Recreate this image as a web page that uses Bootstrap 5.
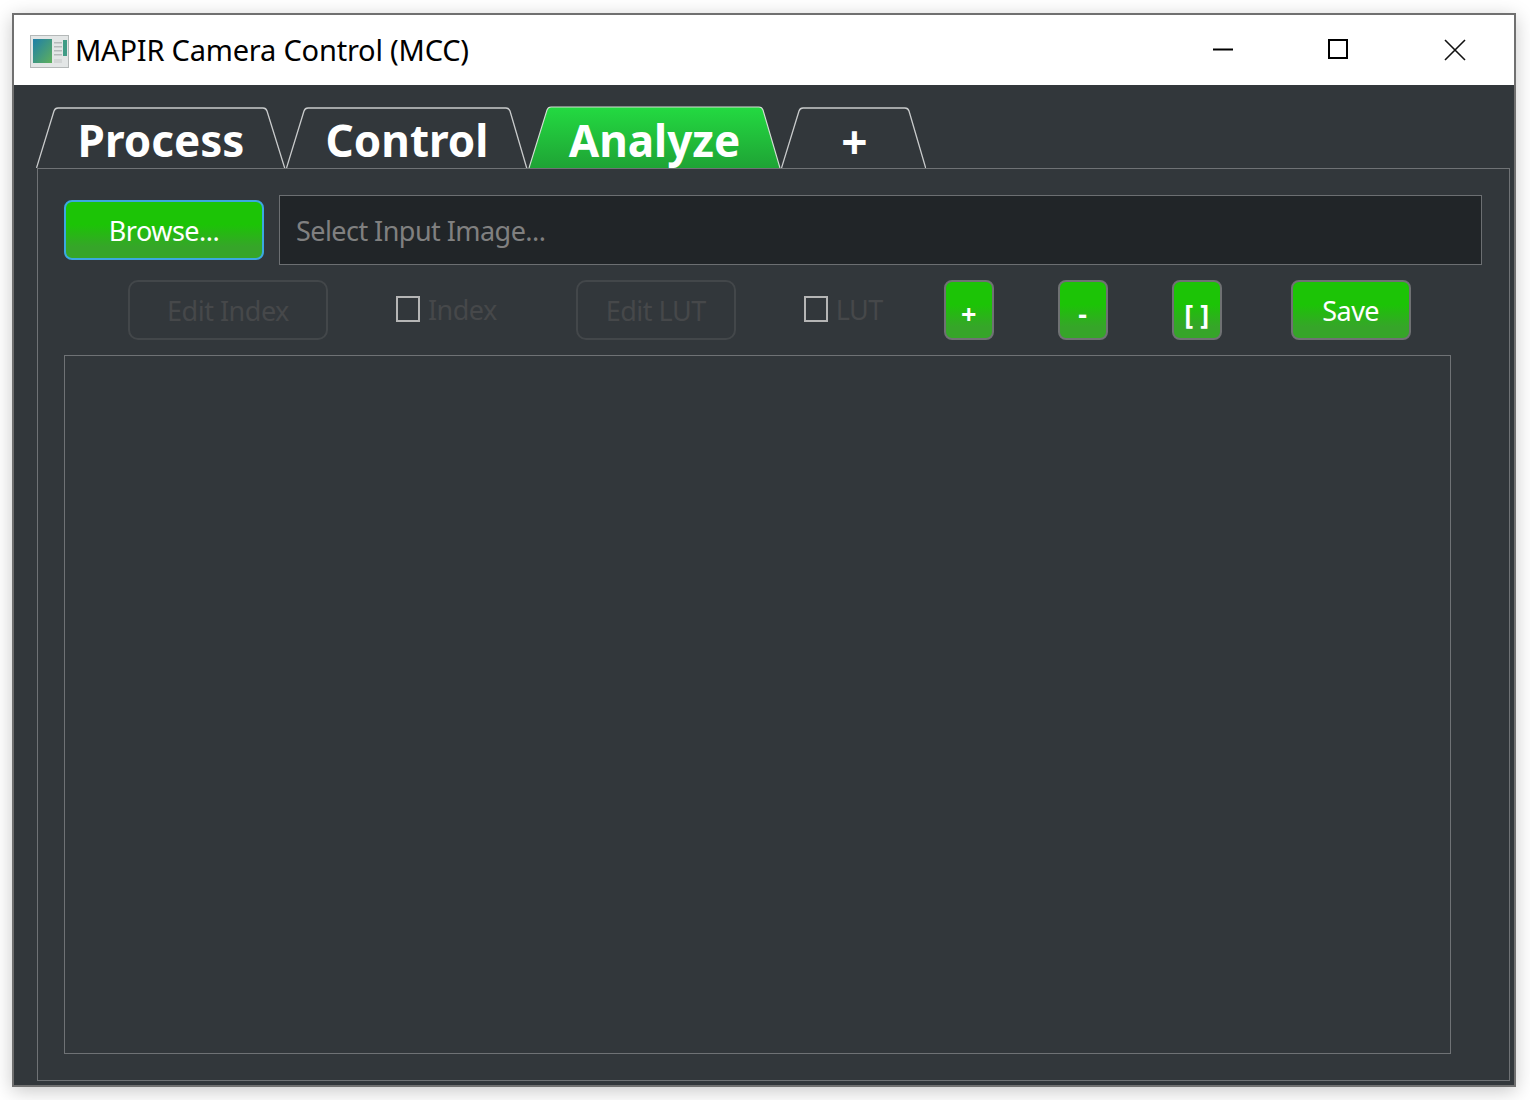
<!DOCTYPE html>
<html lang="en">
<head>
    <meta charset="UTF-8">
    <meta name="viewport" content="width=device-width, initial-scale=1.0">
    <title>MAPIR Camera Control (MCC)</title>
    <link href="https://cdn.jsdelivr.net/npm/bootstrap@5.3.2/dist/css/bootstrap.min.css" rel="stylesheet">
    <style>
        html, body { height: 100%; }
        body { background: #fff; font-family: "Noto Sans", "Open Sans", sans-serif; overflow: hidden; }
        .app-window { width: 1504px; height: 1074px; margin: 13px 0 0 12px; border: 2px solid #707070; box-shadow: 0 4px 18px rgba(0,0,0,.22); background: #32373b; }
        .title-bar { height: 70px; background: #fff; padding-left: 16px; }
        .title-icon { margin-right: 5px; margin-top: 2px; }
        .title-text { font-size: 29px; color: #000; line-height: 1; letter-spacing: -.2px; padding-bottom: 2px; }
        .win-btns { margin-right: 48px; gap: 95px; }
        .win-max { margin-top: -2px; margin-right: 1px; }
        .tab-strip { padding: 22px 0 0 22px; height: 83px; }
        .tab-item { display: grid; height: 61px; color: #fff; font-weight: 700; font-size: 44px; line-height: 1; }
        .tab-item > * { grid-area: 1 / 1; }
        .tab-label { place-self: center; padding-top: 5px; }
        .tab-plus { font-size: 46px; padding: 6px 0 0 2px; }
        .tab-pane-box { margin: 0 4px 0 23px; height: 913px; border: 1px solid #6f7275; padding: 26px 27px 26px 26px; }
        .browse-row { gap: 15px; height: 70px; }
        .green-btn { background: linear-gradient(#1cc406 40%, #36a529 80%); border: 2px solid #6f7173; border-radius: 8px; color: #fff; font-size: 27px; letter-spacing: -.5px; height: 60px; padding: 0; line-height: 1; }
        .green-btn:hover { color: #fff; }
        .browse-btn { width: 200px; border-color: #3ba8e0; }
        .path-input { flex: 1; height: 70px; background: #212528; border: 1px solid #6c6f72; color: #808080; font-size: 27px; letter-spacing: -.55px; padding: 0 16px; border-radius: 0; }
        .path-input::placeholder { color: #808080; opacity: 1; }
        .tool-row { height: 60px; margin-top: 15px; padding-left: 64px; }
        .off-btn, .off-btn:disabled { background: transparent; border: 2px solid #43474a; border-radius: 10px; color: #46484a; font-size: 27px; letter-spacing: -.5px; height: 60px; padding: 0; line-height: 1; opacity: 1; }
        .check-wrap { color: #46484a; font-size: 27px; letter-spacing: -.55px; line-height: 1; padding-bottom: 2px; }
        .check-box { display: block; width: 24px; height: 26px; border: 2px solid #b5b5b5; margin-right: 8px; }
        .w-index { width: 200px; }
        .w-lut { width: 160px; margin-left: 79px; }
        .ml-index { margin-left: 68px; }
        .ml-lut { margin-left: 68px; }
        .square-btn { width: 50px; font-weight: 700; font-size: 27px; letter-spacing: 0; padding-top: 6px; }
        .ml-plus { margin-left: 61px; }
        .ml-step { margin-left: 64px; }
        .save-btn { width: 120px; margin-left: 69px; }
        .view-box { width: 1387px; height: 699px; margin-top: 15px; border: 1px solid #6f7275; }
    </style>
</head>
<body>
    <div class="app-window d-flex flex-column">
        <div class="title-bar d-flex align-items-center">
            <svg class="title-icon" width="40" height="33" viewBox="0 0 40 33">
                <defs>
                    <linearGradient id="iconMap" x1="0" y1="0" x2="1" y2="1">
                        <stop offset="0" stop-color="#1f7fa8"/><stop offset="1" stop-color="#5fb05c"/>
                    </linearGradient>
                </defs>
                <rect x=".5" y=".5" width="38" height="32" fill="#e3e6e6" stroke="#b4b8b8"/>
                <rect x="3" y="4" width="19" height="24" fill="url(#iconMap)"/>
                <rect x="24" y="7" width="8" height="1.5" fill="#b5baba"/>
                <rect x="24" y="11" width="8" height="1.5" fill="#b5baba"/>
                <rect x="24" y="15" width="8" height="1.5" fill="#b5baba"/>
                <rect x="24" y="19" width="8" height="1.5" fill="#b5baba"/>
                <rect x="24" y="24" width="8" height="4" fill="#d3d6d6"/>
                <rect x="33" y="5" width="4" height="16" fill="#3f9b85"/>
            </svg>
            <span class="title-text">MAPIR Camera Control (MCC)</span>
            <div class="win-btns ms-auto d-flex align-items-center">
                <svg width="20" height="20" viewBox="0 0 20 20"><path d="M0 9.5h20" stroke="#000" stroke-width="2" fill="none"/></svg>
                <svg class="win-max" width="20" height="20" viewBox="0 0 20 20"><rect x="1" y="1" width="18" height="18" stroke="#000" stroke-width="2" fill="none"/></svg>
                <svg width="22" height="22" viewBox="0 0 22 22"><path d="M1 1l20 20M21 1L1 21" stroke="#111" stroke-width="1.6" fill="none"/></svg>
            </div>
        </div>

        <div class="tab-strip d-flex">
            <div class="tab-item" style="width:250px">
                <svg width="250" height="61" viewBox="0 0 250 61"><path d="M.5 61L18 4q1-3 4-3h205q3 0 4 3l18 58" fill="none" stroke="#c9cbcc" stroke-width="1.3"/></svg>
                <span class="tab-label">Process</span>
            </div>
            <div class="tab-item" style="width:242px">
                <svg width="242" height="61" viewBox="0 0 242 61"><path d="M.5 61L18 4q1-3 4-3h198q3 0 4 3l17 58" fill="none" stroke="#c9cbcc" stroke-width="1.3"/></svg>
                <span class="tab-label">Control</span>
            </div>
            <div class="tab-item" style="width:253px">
                <svg class="overflow-visible" width="253" height="61" viewBox="0 -1 253 61">
                    <defs>
                        <linearGradient id="tabGreen" x1="0" y1="0" x2="0" y2="1">
                            <stop offset="0" stop-color="#23da41"/><stop offset="1" stop-color="#1fa335"/>
                        </linearGradient>
                    </defs>
                    <path d="M1 60L19 2q1-3 4-3h208q3 0 4 3l17 58z" fill="url(#tabGreen)"/>
                    <path d="M1 60L19 2q1-3 4-3h208q3 0 4 3l17 58" fill="none" stroke="#d5ddd6" stroke-width="1.1"/>
                </svg>
                <span class="tab-label">Analyze</span>
            </div>
            <div class="tab-item" style="width:145px">
                <svg width="145" height="61" viewBox="0 0 145 61"><path d="M.5 61L18 4q1-3 4-3h102q3 0 4 3l17 58" fill="none" stroke="#c9cbcc" stroke-width="1.3"/></svg>
                <span class="tab-label tab-plus">+</span>
            </div>
        </div>

        <div class="tab-pane-box">
            <div class="browse-row d-flex align-items-center">
                <button type="button" class="btn green-btn browse-btn">Browse...</button>
                <input type="text" class="path-input" placeholder="Select Input Image...">
            </div>
            <div class="tool-row d-flex align-items-center">
                <button type="button" class="btn off-btn w-index" disabled>Edit Index</button>
                <label class="check-wrap d-flex align-items-center ml-index"><span class="check-box"></span>Index</label>
                <button type="button" class="btn off-btn w-lut" disabled>Edit LUT</button>
                <label class="check-wrap d-flex align-items-center ml-lut"><span class="check-box"></span>LUT</label>
                <button type="button" class="btn green-btn square-btn ml-plus">+</button>
                <button type="button" class="btn green-btn square-btn ml-step">-</button>
                <button type="button" class="btn green-btn square-btn ml-step">[ ]</button>
                <button type="button" class="btn green-btn save-btn">Save</button>
            </div>
            <div class="view-box"></div>
        </div>
    </div>
    <script src="https://cdn.jsdelivr.net/npm/bootstrap@5.3.2/dist/js/bootstrap.bundle.min.js"></script>
</body>
</html>
